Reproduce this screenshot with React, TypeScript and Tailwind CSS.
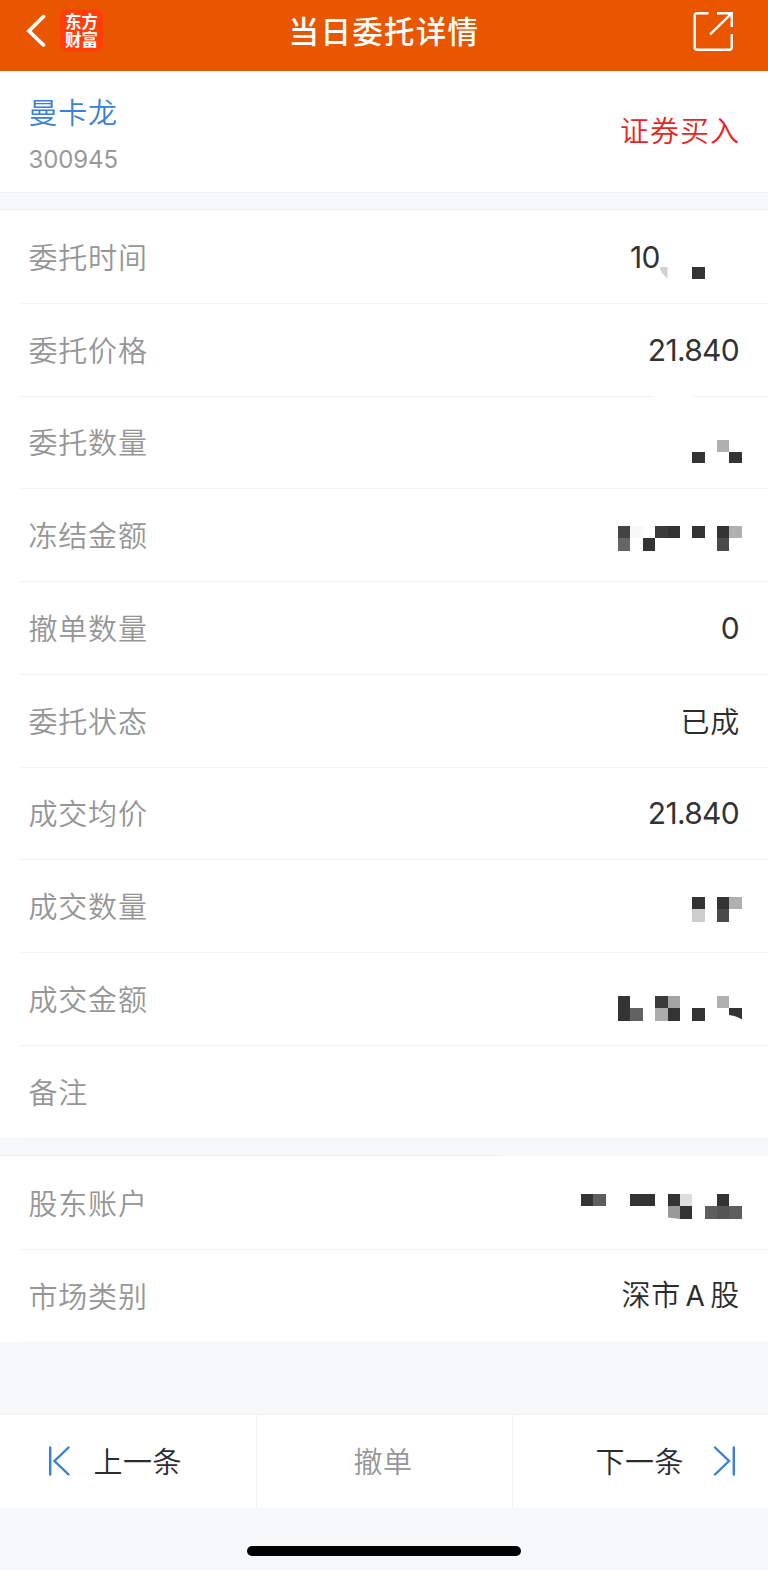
import type { ReactNode } from 'react';

type Cell = { col: number; row: number; fill: string; h?: number };

const DARK = '#333333';
const UNIT = 12.36;

/* Pixelated block covering a private value; 13 columns wide, aligned to the right edge. */
function Mosaic({ top, cells, children }: { top: number; cells: Cell[]; children?: ReactNode }) {
  return (
    <svg className="-mr-[3px] block h-[93px] w-[161px] shrink-0" viewBox="0 0 161 93" shapeRendering="crispEdges">
      {cells.map((c) => {
        const x = Math.round(c.col * UNIT);
        const x2 = Math.round((c.col + 1) * UNIT);
        const y = Math.round(top + c.row * UNIT);
        const y2 = Math.round(top + (c.row + 1) * UNIT);
        return (
          <rect key={`${c.col}-${c.row}`} x={x} y={y} width={x2 - x} height={c.h ?? y2 - y} fill={c.fill} />
        );
      })}
      {children}
    </svg>
  );
}

function Row({ label, children, line = 'full' }: { label: string; children?: ReactNode; line?: 'full' | 'gap' }) {
  return (
    <div className="relative flex h-[92.75px] items-center justify-between pr-[29px] pl-[28.5px]">
      <span className="mb-[1px] text-[29px] leading-[40px] font-[350] tracking-[0.8px] text-[#969696]">{label}</span>
      {children}
      <div className="absolute right-0 -bottom-px left-[19px] flex h-px">
        <div className={line === 'gap' ? 'w-[635px] bg-[#f3f3f4]' : 'w-full bg-[#f3f3f4]'} />
        {line === 'gap' && <div className="ml-10 flex-1 bg-[#f3f3f4]" />}
      </div>
    </div>
  );
}

function Num({ children }: { children: ReactNode }) {
  return <span className="mt-[1px] font-['Inter'] text-[30px] leading-[40px] tracking-[-0.7px] text-[#333333]">{children}</span>;
}

function Txt({ children }: { children: ReactNode }) {
  return <span className="-mr-px mb-[1px] text-[29px] leading-[40px] font-[350] tracking-[0.8px] text-[#2c2c2c]">{children}</span>;
}

export default function App() {
  return (
    <div className="flex h-[1570px] w-[768px] flex-col overflow-hidden bg-[#f7f8fa] font-['Noto_Sans_CJK_SC','Noto_Sans',sans-serif]">
      <header className="grid h-[71px] shrink-0 grid-cols-[1fr_auto_1fr] items-start bg-[#ea5500] text-white">
        <div className="flex items-start pl-[26px]">
          <svg className="mt-[14px] h-[34px] w-[20px]" viewBox="0 0 20 34" fill="none" stroke="#fff" strokeWidth="3.8" strokeLinecap="round" strokeLinejoin="miter">
            <path d="M17.500 2.500 3 17 17.500 31" />
          </svg>
          <div className="mt-[9px] ml-[14px] flex h-[43px] w-[43px] flex-col items-center justify-center rounded-[8px] bg-[#ff3f0a] pb-px text-[16.5px] leading-[18.5px] font-bold">
            <span>东方</span>
            <span>财富</span>
          </div>
        </div>
        <h1 className="mt-[9px] text-[30.5px] leading-[42px] font-medium tracking-[1.3px]">当日委托详情</h1>
        <div className="flex justify-end pr-[34px]">
          <svg className="mt-[11px] h-[41px] w-[41px]" viewBox="0 0 41 41" fill="none" stroke="#fff" strokeWidth="2.4">
            <path d="M15.500 2.200H4.200a2.500 2.500 0 0 0-2.500 2.500v31.600a2.500 2.500 0 0 0 2.500 2.500h32.100a2.500 2.500 0 0 0 2.500-2.500V23" />
            <path d="M24 2.200h14.800V16M38.300 2.700 17.200 23.300" />
          </svg>
        </div>
      </header>

      <section className="flex h-[121px] shrink-0 items-start justify-between bg-white pr-[28px] pl-[28.5px]">
        <div className="flex flex-col">
          <span className="mt-[20px] text-[29px] leading-[40px] font-[350] tracking-[0.8px] text-[#3a7fdc]">曼卡龙</span>
          <span className="mt-[13px] font-['Inter'] text-[24px] leading-[32px] tracking-[-0.1px] text-[#999999]">300945</span>
        </div>
        <span className="mt-[38px] text-[29px] leading-[40px] font-[350] tracking-[1px] text-[#ea2423]">证券买入</span>
      </section>

      <div className="h-[18px] shrink-0 border-y border-[#f1f2f4]" />

      <section className="flex shrink-0 flex-col bg-white">
        <Row label="委托时间">
          <div className="flex items-center">
            <div className="mt-[2px] -mr-[78px] w-[29px] overflow-hidden whitespace-nowrap">
              <Num>10</Num>
            </div>
            <Mosaic top={57} cells={[{ col: 9, row: 0, fill: DARK }]}>
              <path d="M78.500 57h8v11.500C82.500 65.500 79.500 61 78.500 57z" fill="#d2d2d2" shapeRendering="auto" />
            </Mosaic>
          </div>
        </Row>
        <Row label="委托价格" line="gap">
          <Num>21.840</Num>
        </Row>
        <Row label="委托数量">
          <Mosaic
            top={45}
            cells={[
              { col: 9, row: 1, fill: DARK, h: 11 },
              { col: 11, row: 0, fill: '#b0b0b0' },
              { col: 12, row: 1, fill: DARK, h: 11 },
            ]}
          />
        </Row>
        <Row label="冻结金额">
          <Mosaic
            top={38}
            cells={[
              { col: 3, row: 0, fill: '#444444' },
              { col: 3, row: 1, fill: '#666666' },
              { col: 4, row: 0, fill: '#f8f8f8' },
              { col: 5, row: 1, fill: DARK },
              { col: 6, row: 0, fill: '#3b3b3b' },
              { col: 7, row: 0, fill: DARK },
              { col: 9, row: 0, fill: DARK },
              { col: 11, row: 0, fill: DARK },
              { col: 11, row: 1, fill: '#4a4a4a' },
              { col: 12, row: 0, fill: '#b0b0b0' },
            ]}
          />
        </Row>
        <Row label="撤单数量">
          <Num>0</Num>
        </Row>
        <Row label="委托状态">
          <Txt>已成</Txt>
        </Row>
        <Row label="成交均价">
          <Num>21.840</Num>
        </Row>
        <Row label="成交数量">
          <Mosaic
            top={38}
            cells={[
              { col: 9, row: 0, fill: DARK },
              { col: 9, row: 1, fill: '#cecece' },
              { col: 11, row: 0, fill: DARK },
              { col: 11, row: 1, fill: '#4a4a4a' },
              { col: 12, row: 0, fill: '#b0b0b0' },
            ]}
          />
        </Row>
        <Row label="成交金额">
          <Mosaic
            top={44}
            cells={[
              { col: 3, row: 0, fill: DARK },
              { col: 3, row: 1, fill: DARK },
              { col: 4, row: 1, fill: '#626262' },
              { col: 6, row: 0, fill: '#3b3b3b' },
              { col: 6, row: 1, fill: '#acacac' },
              { col: 7, row: 0, fill: '#a4a4a4' },
              { col: 7, row: 1, fill: DARK },
              { col: 9, row: 1, fill: DARK },
              { col: 11, row: 0, fill: '#b0b0b0' },
            ]}
          >
            <path d="M148 56h13v11.500Q155 63.500 148 63z" fill={DARK} shapeRendering="auto" />
          </Mosaic>
        </Row>
        <Row label="备注" />
      </section>

      <div className="flex h-[18.5px] shrink-0 items-end">
        <div className="h-px w-[502px] bg-[#eff0f2]" />
      </div>

      <section className="flex shrink-0 flex-col bg-white">
        <Row label="股东账户">
          <Mosaic
            top={38}
            cells={[
              { col: 0, row: 0, fill: DARK },
              { col: 1, row: 0, fill: '#5e5e5e' },
              { col: 4, row: 0, fill: DARK },
              { col: 5, row: 0, fill: DARK },
              { col: 7, row: 0, fill: DARK },
              { col: 8, row: 0, fill: '#dedede' },
              { col: 8, row: 1, fill: DARK },
              { col: 10, row: 1, fill: '#5e5e5e' },
              { col: 11, row: 0, fill: DARK },
              { col: 11, row: 1, fill: '#555555' },
              { col: 12, row: 1, fill: '#5e5e5e' },
            ]}
          >
            <path d="M87 50h12v13l-12-1.500z" fill="#999999" shapeRendering="auto" />
          </Mosaic>
        </Row>
        <Row label="市场类别">
          <Txt>
            深市<span className="mx-[4.5px] font-['Inter'] text-[28px] font-normal">A</span>股
          </Txt>
        </Row>
      </section>

      <nav className="mt-[72px] grid h-[94px] shrink-0 grid-cols-3 border-t border-[#f2f3f5] bg-white text-[29px] leading-[40px] font-[350] tracking-[0.5px] text-[#2c2c2c]">
        <div className="-mr-px flex items-center border-r border-[#f1f2f4] pl-[46.5px]">
          <svg className="h-[30px] w-[23px]" viewBox="0 0 23 30" fill="none" stroke="#3a7fdc" strokeWidth="2.4" strokeLinecap="round">
            <path d="M3.200 1.500v27M21.500 1.500 7.500 15l14 13.500" />
          </svg>
          <span className="mb-[2px] ml-[24px]">上一条</span>
        </div>
        <div className="-mr-px flex items-center justify-center border-r border-[#f1f2f4] pr-[2px] text-[#969696]">
          <span className="mb-[2px]">撤单</span>
        </div>
        <div className="flex items-center justify-end pr-[32px]">
          <span className="mr-[29px] mb-[2px]">下一条</span>
          <svg className="h-[30px] w-[23px]" viewBox="0 0 23 30" fill="none" stroke="#3a7fdc" strokeWidth="2.4" strokeLinecap="round">
            <path d="M20.800 1.500v27M2 1.500 16 15 2 28.500" />
          </svg>
        </div>
      </nav>

      <div className="mx-auto mt-[38px] h-[10px] w-[274px] shrink-0 rounded-full bg-black" />
    </div>
  );
}
